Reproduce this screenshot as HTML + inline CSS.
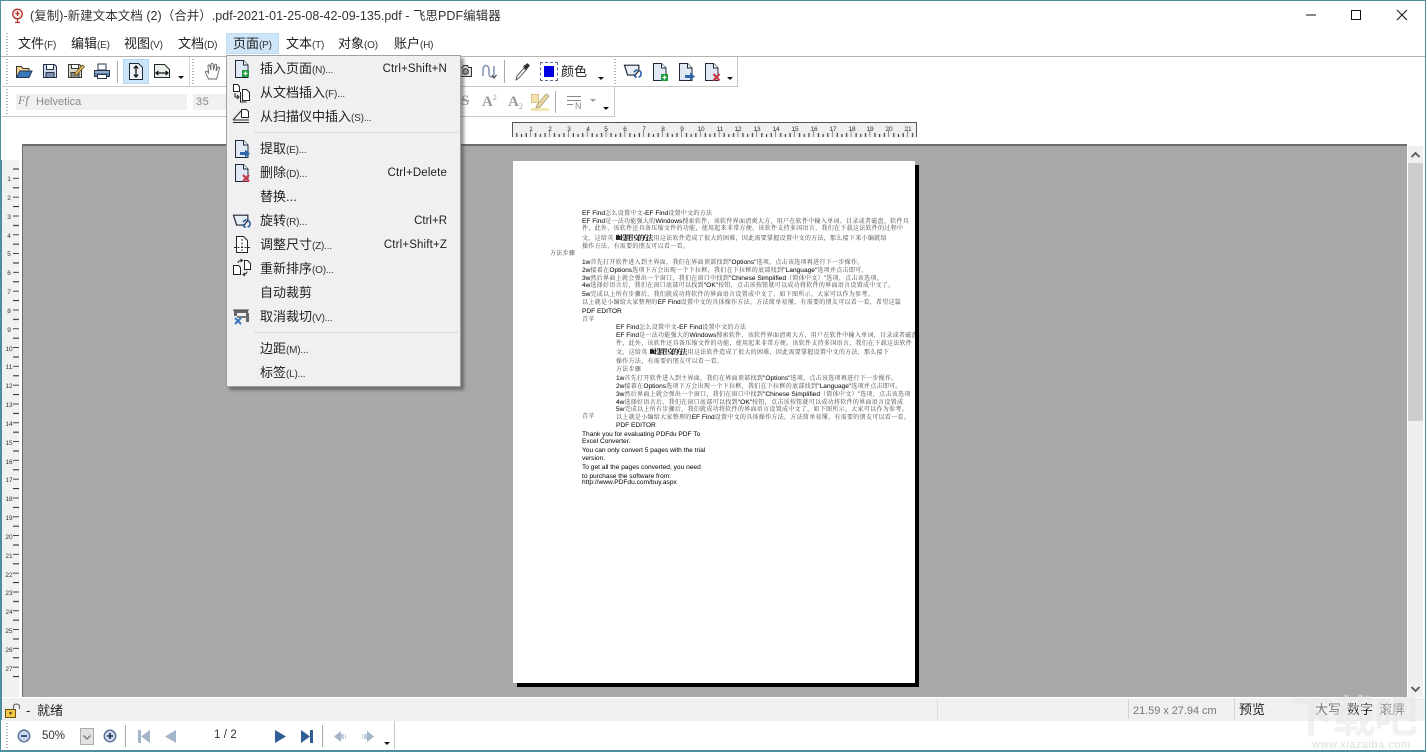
<!DOCTYPE html>
<html lang="zh"><head><meta charset="utf-8"><title>飞思PDF编辑器</title>
<style>
*{box-sizing:border-box}
html,body{margin:0;padding:0;width:1426px;height:752px;overflow:hidden;background:#fff}
body{font-family:"Liberation Sans","Noto Sans CJK SC",sans-serif;position:relative;color:#222}
.a{position:absolute}
.t{position:absolute;white-space:nowrap}
.m{position:absolute;top:35px;font-size:13px;line-height:18px;white-space:nowrap;color:#1c1c1c}
.m small,.i small{font-size:10px;color:#333;letter-spacing:-.2px}
.grip{position:absolute;width:2px;background:repeating-linear-gradient(#b5b5b5 0 1px,#fff 1px 3px)}
.sep{position:absolute;width:1px;background:#a9a9a9}
.i{position:absolute;left:260px;font-size:13px;line-height:18px;white-space:nowrap;color:#222}
.s{position:absolute;right:13px;font-size:11.5px;line-height:18px;letter-spacing:.15px;color:#222;white-space:nowrap}
.ic{position:absolute;overflow:visible}
.d{position:absolute;font-family:"Liberation Sans","Noto Serif CJK SC",serif;font-size:6px;line-height:9px;white-space:nowrap;color:#444;letter-spacing:.3px}
.d b{font-weight:400;color:#000;font-size:6.6px;letter-spacing:0}
.d b.o{font-weight:700;font-size:7px;letter-spacing:-2.6px;color:#222;margin-right:3px}
.ar{position:absolute;width:0;height:0;border-left:3px solid transparent;border-right:3px solid transparent;border-top:3px solid #111}
</style></head><body>

<svg width="0" height="0" style="position:absolute">
<defs>
<symbol id="pg" viewBox="0 0 20 20"><path d="M3.5 1.5h8l4.5 4.500v12.500H3.500z" fill="#dfe8f4" stroke="#1f2a3a"/><path d="M11.500 1.500v4.500h4.500" fill="#fff" stroke="#1f2a3a"/></symbol>
<symbol id="rot" viewBox="0 0 22 20"><path d="M1.500 3.500h16v6l-4 5H5z" fill="#e8eef6" stroke="#1d2530" stroke-width="1.300"/><circle cx="16" cy="13" r="4" fill="none" stroke="#2a62a8" stroke-width="1.800" stroke-dasharray="5 2"/></symbol>
</defs>
</svg>

<!-- title bar -->
<svg class="ic" style="left:10px;top:8px" width="15" height="16" viewBox="0 0 15 16"><circle cx="7.500" cy="6" r="4.800" fill="#fbe9e6" stroke="#b5352e" stroke-width="1.300"/><path d="M7.500 3v5M5.500 5.500h4M7.500 11v3M5 14.500h5" stroke="#b5352e" stroke-width="1.200" fill="none"/></svg>
<div class="t" id="title" style="left:30px;top:8px;font-size:12.5px;line-height:17px;color:#333;letter-spacing:.03px">(复制)-新建文本文档 (2)（合并）.pdf-2021-01-25-08-42-09-135.pdf - 飞思PDF编辑器</div>
<svg class="ic" style="left:1300px;top:8px" width="110" height="16" viewBox="0 0 110 16"><path d="M6 7h10" stroke="#111" stroke-width="1"/><rect x="51.500" y="2.500" width="9" height="9" fill="none" stroke="#111"/><path d="M97 2l10 10M107 2L97 12" stroke="#111" stroke-width="1"/></svg>

<!-- menu bar -->
<div class="a" style="left:226px;top:33px;width:53px;height:21px;background:#cfe5f8;border:1px solid #bcdcf4"></div>
<div class="m" style="left:18px">文件<small>(F)</small></div>
<div class="m" style="left:71px">编辑<small>(E)</small></div>
<div class="m" style="left:124px">视图<small>(V)</small></div>
<div class="m" style="left:178px">文档<small>(D)</small></div>
<div class="m" style="left:233px">页面<small>(P)</small></div>
<div class="m" style="left:286px">文本<small>(T)</small></div>
<div class="m" style="left:338px">对象<small>(O)</small></div>
<div class="m" style="left:394px">账户<small>(H)</small></div>
<div class="grip" style="left:6px;top:33px;height:22px"></div>

<!-- toolbar lines -->
<div class="a" style="left:0;top:56px;width:1426px;height:1px;background:#b3b3b3"></div>
<div class="a" style="left:2px;top:86px;width:735px;height:1px;background:#c8c8c8"></div>
<div class="a" style="left:2px;top:116px;width:612px;height:1px;background:#c8c8c8"></div>
<div class="a" style="left:737px;top:57px;width:1px;height:30px;background:#c8c8c8"></div>
<div class="a" style="left:614px;top:87px;width:1px;height:30px;background:#c8c8c8"></div>
<div class="a" style="left:189px;top:57px;width:1px;height:29px;background:#d4d4d4"></div>
<div class="grip" style="left:6px;top:59px;height:26px"></div>
<div class="grip" style="left:6px;top:89px;height:26px"></div>
<div class="grip" style="left:192px;top:59px;height:26px"></div>
<div class="grip" style="left:614px;top:59px;height:26px"></div>

<!-- toolbar row 1 -->
<svg class="ic" style="left:15px;top:63px" width="18" height="17" viewBox="0 0 18 17"><path d="M1.500 14V3.500h5l1.500 2h6v2" fill="#f2cf8e" stroke="#33312c"/><path d="M1.500 14.500L5 8h12l-3 6.500z" fill="#3d78bd" stroke="#1c3556"/></svg>
<svg class="ic" style="left:42px;top:63px" width="16" height="16" viewBox="0 0 16 16"><path d="M1.500 1.500h11l2 2v11h-13z" fill="#cfd8e8" stroke="#26304a"/><rect x="4.500" y="1.500" width="7" height="5" fill="#fff" stroke="#26304a"/><rect x="4" y="9.500" width="8" height="5" fill="#7f8fb0" stroke="#26304a"/></svg>
<svg class="ic" style="left:67px;top:63px" width="18" height="16" viewBox="0 0 18 16"><path d="M1.500 1.500h11l2 2v11h-13z" fill="#d9d6c8" stroke="#3a3a35"/><rect x="4.500" y="1.500" width="7" height="4" fill="#fff" stroke="#3a3a35"/><rect x="4" y="9.500" width="8" height="5" fill="#8d8d80" stroke="#3a3a35"/><path d="M8 10L15.500 2l2 1.500L10 11.500 7.500 12z" fill="#e9bd5c" stroke="#5c4a1c" stroke-width=".7"/></svg>
<svg class="ic" style="left:93px;top:63px" width="18" height="17" viewBox="0 0 18 17"><rect x="5" y="1" width="8" height="6" fill="#fff" stroke="#2b3548"/><path d="M1.500 7.500h15v6h-15z" fill="#5f7fa8" stroke="#27364c"/><rect x="4.500" y="11.500" width="9" height="4" fill="#fff" stroke="#27364c"/><path d="M2 9h14" stroke="#c5d3e6"/></svg>
<div class="sep" style="left:117px;top:61px;height:22px"></div>
<div class="a" style="left:123px;top:59px;width:26px;height:25px;background:#cce4f7;border:1px solid #b6d7f1"></div>
<svg class="ic" style="left:128px;top:62px" width="16" height="19" viewBox="0 0 16 19"><path d="M1.500 1.500h9l4 4v12h-13z" fill="#eef3f9" stroke="#1a2a3a"/><path d="M8 4v11M5.800 6.500L8 4l2.200 2.500M5.800 12.500L8 15l2.200-2.500" fill="none" stroke="#111" stroke-width="1.300"/></svg>
<svg class="ic" style="left:153px;top:63px" width="18" height="16" viewBox="0 0 18 16"><path d="M1.500 1.500h10l5 5v8h-15z" fill="#e9f0e9" stroke="#1a2a24"/><path d="M3 10h12M5.500 8L3 10l2.500 2M12.500 8L15 10l-2.500 2" fill="none" stroke="#111" stroke-width="1.200"/></svg>
<div class="ar" style="left:178px;top:76px"></div>
<svg class="ic" style="left:204px;top:62px" width="18" height="19" viewBox="0 0 18 19"><path d="M4.500 17C3.500 14 1 11 1.500 9.500c1-1 2 0 3 1.500L4 4c0-1.500 1.800-1.500 2 0l.8 4L7 2.500c0-1.500 2-1.500 2.200 0L9.500 8l1.300-5c.4-1.400 2-1 1.900.4L12 9l1.800-3.500c.7-1.200 2.200-.5 1.700 1L14 12c-.5 2-1 3.500-1.500 5z" fill="#fdfdfd" stroke="#666" stroke-width=".9"/></svg>
<svg class="ic" style="left:458px;top:63px" width="16" height="16" viewBox="0 0 16 16"><path d="M1.500 4.500h3l1-2h4l1 2h3v9h-12z" fill="#ddd" stroke="#333"/><circle cx="7.500" cy="8.500" r="2.800" fill="#99a" stroke="#333"/></svg>
<svg class="ic" style="left:481px;top:63px" width="18" height="17" viewBox="0 0 18 17"><path d="M2 13V7c0-6 6-6 6 0v4c0 4 5 4 5 0V3" fill="none" stroke="#7f93b0" stroke-width="1.500"/><path d="M11 12l2 3 2.500-3" fill="none" stroke="#333"/></svg>
<div class="sep" style="left:504px;top:60px;height:23px"></div>
<svg class="ic" style="left:515px;top:62px" width="15" height="19" viewBox="0 0 15 19"><path d="M1 18l1-4L9 6l2 2-7 8z" fill="#f4f4f4" stroke="#444" stroke-width=".8"/><path d="M8.500 4.500l4-3 2 2-3 4z" fill="#333" stroke="#333" stroke-width=".6"/></svg>
<div class="a" style="left:540px;top:62px;width:18px;height:19px;border:1px dashed #5c7390;background:#fff"></div>
<div class="a" style="left:544px;top:66px;width:10px;height:11px;background:#0000e0"></div>
<div class="t" style="left:561px;top:63px;font-size:13px;line-height:18px;color:#222">颜色</div>
<div class="ar" style="left:598px;top:77px"></div>
<svg class="ic" style="left:623px;top:62px" width="20" height="18"><use href="#rot" width="20" height="18"/></svg>
<svg class="ic" style="left:650px;top:62px" width="20" height="20"><use href="#pg" width="20" height="20"/><rect x="11" y="12" width="7" height="7" fill="#1d9a3c"/><path d="M12.500 15.500h4M14.500 13.500v4" stroke="#fff" stroke-width="1.300"/></svg>
<svg class="ic" style="left:676px;top:62px" width="20" height="20"><use href="#pg" width="20" height="20"/><path d="M9 13h5v-2.500l5 4-5 4V16H9z" fill="#2f66a8"/></svg>
<svg class="ic" style="left:702px;top:62px" width="20" height="20"><use href="#pg" width="20" height="20"/><path d="M11.500 12l6 6.500M17.500 12l-6 6.500" stroke="#c93a4a" stroke-width="2.200"/></svg>
<div class="ar" style="left:727px;top:77px"></div>

<!-- toolbar row 2 -->
<div class="a" style="left:16px;top:94px;width:171px;height:16px;background:#f0f0f0"></div>
<div class="a" style="left:193px;top:94px;width:35px;height:16px;background:#f0f0f0"></div>
<div class="t" style="left:18px;top:92px;font-family:'Liberation Serif',serif;font-style:italic;font-size:12px;line-height:17px;color:#888">Ff</div>
<div class="t" style="left:36px;top:95px;font-size:11px;line-height:14px;color:#8a8a8a">Helvetica</div>
<div class="t" style="left:196px;top:95px;font-size:11px;line-height:14px;letter-spacing:.5px;color:#8a8a8a">35</div>
<div class="t" style="left:461px;top:93px;font-family:'Liberation Serif',serif;font-weight:700;font-size:15px;line-height:17px;color:#a8a8a8;text-decoration:line-through">S</div>
<div class="t" style="left:482px;top:94px;font-family:'Liberation Serif',serif;font-weight:700;font-size:15px;line-height:17px;color:#9a9a9a">A<span style="font-size:8px;position:relative;top:-6px;font-weight:400">2</span></div>
<div class="t" style="left:508px;top:94px;font-family:'Liberation Serif',serif;font-weight:700;font-size:15px;line-height:17px;color:#9a9a9a">A<span style="font-size:8px;position:relative;top:3px;font-weight:400">2</span></div>
<svg class="ic" style="left:530px;top:92px" width="20" height="20" viewBox="0 0 20 20"><path d="M1 16h18v3H1z" fill="#f3e7b0"/><path d="M1.500 2.500h7v8h-7z" fill="#f3e2ab" stroke="#d8c589"/><path d="M7 13l9-11 3 2-9 11-4 1z" fill="#ead99c" stroke="#b5ab8a"/></svg>
<div class="sep" style="left:555px;top:91px;height:22px"></div>
<svg class="ic" style="left:567px;top:95px" width="30" height="16" viewBox="0 0 30 16"><path d="M0 1.500h14M0 5.500h14M0 9.500h6" stroke="#888"/><text x="8" y="14" font-size="9" fill="#888" font-family="Liberation Sans,sans-serif">N</text><path d="M23 4h6l-3 3z" fill="#999"/></svg>
<div class="ar" style="left:603px;top:107px"></div>

<!-- horizontal ruler -->
<svg class="ic" style="left:512px;top:122px" width="405" height="16" viewBox="0 0 405 16">
<defs><pattern id="hr" x="0" y="0" width="18.85" height="16" patternUnits="userSpaceOnUse"><rect x="4.300" y="11" width="1" height="4" fill="#222"/><rect x="9" y="12" width="1" height="3" fill="#222"/><rect x="13.700" y="11" width="1" height="4" fill="#222"/><rect x="18.400" y="8" width="1" height="7" fill="#222"/></pattern></defs>
<rect x=".5" y=".5" width="404" height="15" fill="#efefef"/><path d="M.5 15V.5h404V15" fill="none" stroke="#555"/><rect x="0" y="0" width="404" height="16" fill="url(#hr)"/>
<g font-family="Liberation Sans,sans-serif" font-size="6.500" fill="#333" text-anchor="middle"><text x="19" y="9">1</text><text x="38" y="9">2</text><text x="57" y="9">3</text><text x="76" y="9">4</text><text x="94" y="9">5</text><text x="113" y="9">6</text><text x="132" y="9">7</text><text x="151" y="9">8</text><text x="170" y="9">9</text><text x="189" y="9">10</text><text x="208" y="9">11</text><text x="226" y="9">12</text><text x="245" y="9">13</text><text x="264" y="9">14</text><text x="283" y="9">15</text><text x="302" y="9">16</text><text x="321" y="9">17</text><text x="340" y="9">18</text><text x="358" y="9">19</text><text x="377" y="9">20</text><text x="396" y="9">21</text></g></svg>

<!-- vertical ruler -->
<svg class="ic" style="left:2px;top:160px" width="20" height="537" viewBox="0 0 20 537">
<defs><pattern id="vr" x="0" y="0" width="20" height="18.800" patternUnits="userSpaceOnUse"><rect x="11" y="8.500" width="6" height="1" fill="#222"/><rect x="11" y="18" width="6" height="1" fill="#222"/></pattern></defs>
<rect width="17" height="537" fill="#f1f1f1"/><rect width="17" height="525" fill="url(#vr)"/><rect x="17" width="1" height="537" fill="#fff"/>
<g font-family="Liberation Sans,sans-serif" font-size="6.500" fill="#333" text-anchor="middle"><text x="7" y="21">1</text><text x="7" y="40">2</text><text x="7" y="59">3</text><text x="7" y="78">4</text><text x="7" y="96">5</text><text x="7" y="115">6</text><text x="7" y="134">7</text><text x="7" y="153">8</text><text x="7" y="172">9</text><text x="7" y="191">10</text><text x="7" y="209">11</text><text x="7" y="228">12</text><text x="7" y="247">13</text><text x="7" y="266">14</text><text x="7" y="285">15</text><text x="7" y="304">16</text><text x="7" y="322">17</text><text x="7" y="341">18</text><text x="7" y="360">19</text><text x="7" y="379">20</text><text x="7" y="398">21</text><text x="7" y="417">22</text><text x="7" y="435">23</text><text x="7" y="454">24</text><text x="7" y="473">25</text><text x="7" y="492">26</text><text x="7" y="511">27</text></g></svg>

<!-- work area -->
<div class="a" style="left:22px;top:144px;width:1385px;height:553px;background:#a9a8a9;border-top:2px solid #6c6c6c;border-left:1px solid #6c6c6c"></div>

<!-- scrollbar -->
<div class="a" style="left:1407px;top:146px;width:16px;height:551px;background:#efefef;border-left:1px solid #fff"></div>
<div class="a" style="left:1407px;top:163px;width:16px;height:258px;background:#cdcdcd;border-left:1px solid #fff"></div>
<svg class="ic" style="left:1408px;top:150px" width="15" height="10"><path d="M3.500 7l4-4 4 4" fill="none" stroke="#555" stroke-width="1.800"/></svg>
<svg class="ic" style="left:1408px;top:684px" width="15" height="10"><path d="M3.500 3l4 4 4-4" fill="none" stroke="#555" stroke-width="1.800"/></svg>

<!-- page -->
<div class="a" style="left:517px;top:165px;width:402px;height:522px;background:#000"></div>
<div class="a" style="left:513px;top:161px;width:402px;height:522px;background:#fff;overflow:hidden">
<div class="d" style="left:69px;top:48px"><b>EF Find</b>怎么设置中文<b>-EF Find</b>设置中文的方法</div>
<div class="d" style="left:69px;top:56px"><b>EF Find</b>是一法功能强大的<b>Windows</b>搜索软件，该软件界面清爽大方，用户在软件中输入单词、目录或者磁盘，软件具</div>
<div class="d" style="left:69px;top:64px">件，此外，该软件还具备压缩文件的功能，使用起来非常方便。该软件支持多国语言，我们在下载这法软件的过程中</div>
<div class="d" style="left:69px;top:73px">文，这给英 <b class="o">Find设置中文的方法</b>用这法软件造成了很大的困难，因此需要掌握设置中文的方法，那么接下来小编就给</div>
<div class="d" style="left:69px;top:82px">操作方法，有需要的朋友可以看一看。</div>
<div class="d" style="left:37px;top:89px">方法步骤</div>
<div class="d" style="left:69px;top:97px"><b>1w</b>首先打开软件进入到主界面，我们在界面顶部找到<b>"Options"</b>选项，点击该选项再进行下一步操作。</div>
<div class="d" style="left:69px;top:105px"><b>2w</b>接着在<b>Options</b>选项下方会出现一个下拉框，我们在下拉框的底部找到<b>"Language"</b>选项并点击即可。</div>
<div class="d" style="left:69px;top:113px"><b>3w</b>然后界面上就会弹出一个窗口，我们在窗口中找到<b>"Chinese Simplified</b>（简体中文）"选项，点击该选项。</div>
<div class="d" style="left:69px;top:120px"><b>4w</b>选择好语言后，我们在窗口底部可以找到<b>"OK"</b>按钮，点击该按钮就可以成功将软件的界面语言设置成中文了。</div>
<div class="d" style="left:69px;top:129px"><b>5w</b>完成以上所有步骤后，我们就成功将软件的界面语言设置成中文了，如下图所示，大家可以作为参考。</div>
<div class="d" style="left:69px;top:137px">以上就是小编给大家整理的<b>EF Find</b>设置中文的具体操作方法，方法简单易懂，有需要的朋友可以看一看，希望这篇</div>
<div class="d" style="left:69px;top:146px"><b>PDF EDITOR</b></div>
<div class="d" style="left:69px;top:155px">青苹</div>
<div class="d" style="left:103px;top:162px"><b>EF Find</b>怎么设置中文<b>-EF Find</b>设置中文的方法</div>
<div class="d" style="left:103px;top:170px"><b>EF Find</b>是一法功能强大的<b>Windows</b>搜索软件，该软件界面清爽大方，用户在软件中输入单词，目录或者磁盘</div>
<div class="d" style="left:103px;top:179px">件，此外，该软件还具备压缩文件的功能，使用起来非常方便。该软件支持多国语言，我们在下载这法软件</div>
<div class="d" style="left:103px;top:187px">文，这给英 <b class="o">Find设置中文的方法</b>用这法软件造成了很大的困难，因此需要掌握设置中文的方法，那么接下</div>
<div class="d" style="left:103px;top:197px">操作方法，有需要的朋友可以看一看。</div>
<div class="d" style="left:103px;top:205px">方法步骤</div>
<div class="d" style="left:103px;top:213px"><b>1w</b>首先打开软件进入到主界面，我们在界面顶部找到<b>"Options"</b>选项，点击该选项再进行下一步操作。</div>
<div class="d" style="left:103px;top:221px"><b>2w</b>接着在<b>Options</b>选项下方会出现一个下拉框，我们在下拉框的底部找到<b>"Language"</b>选项并点击即可。</div>
<div class="d" style="left:103px;top:229px"><b>3w</b>然后界面上就会弹出一个窗口，我们在窗口中找到<b>"Chinese Simplified</b>（简体中文）"选项，点击该选项</div>
<div class="d" style="left:103px;top:237px"><b>4w</b>选择好语言后，我们在窗口底部可以找到<b>"OK"</b>按钮，点击该按钮就可以成功将软件的界面语言设置成</div>
<div class="d" style="left:103px;top:244px"><b>5w</b>完成以上所有步骤后，我们就成功将软件的界面语言设置成中文了，如下图所示，大家可以作为参考。</div>
<div class="d" style="left:69px;top:252px">青苹</div>
<div class="d" style="left:103px;top:252px">以上就是小编给大家整理的<b>EF Find</b>设置中文的具体操作方法，方法简单易懂，有需要的朋友可以看一看。</div>
<div class="d" style="left:103px;top:260px"><b>PDF EDITOR</b></div>
<div class="d" style="left:69px;top:269px"><b>Thank you for evaluating PDFdu PDF To</b></div>
<div class="d" style="left:69px;top:276px"><b>Excel Converter.</b></div>
<div class="d" style="left:69px;top:285px"><b>You can only convert 5 pages with the trial</b></div>
<div class="d" style="left:69px;top:293px"><b>version.</b></div>
<div class="d" style="left:69px;top:302px"><b>To get all the pages converted, you need</b></div>
<div class="d" style="left:69px;top:311px"><b>to purchase the software from:</b></div>
<div class="d" style="left:69px;top:317px"><b>http://www.PDFdu.com/buy.aspx</b></div>
</div>

<!-- status bar -->
<div class="a" style="left:0;top:697px;width:1426px;height:24px;background:#f0f0f0;border-top:1px solid #fff"></div>
<svg class="ic" style="left:5px;top:703px" width="17" height="16" viewBox="0 0 17 16"><rect x=".5" y="6.500" width="10" height="8" fill="#f1c84c" stroke="#6b5312"/><circle cx="5.500" cy="10" r="1.300" fill="#5c4510"/><path d="M8.500 6V3c0-2.500 6-2.500 6 0v3" fill="none" stroke="#6f6f6f" stroke-width="1.200"/></svg>
<div class="t" style="left:26px;top:702px;font-size:13px;line-height:17px;color:#222">-</div>
<div class="t" style="left:37px;top:702px;font-size:13px;line-height:18px;color:#222">就绪</div>
<div class="sep" style="left:937px;top:699px;height:20px;background:#dcdcdc"></div>
<div class="sep" style="left:1128px;top:699px;height:20px;background:#d4d4d4"></div>
<div class="sep" style="left:1234px;top:699px;height:20px;background:#d4d4d4"></div>
<div class="t" style="left:1133px;top:704px;font-size:11px;line-height:14px;letter-spacing:-.05px;color:#777">21.59 x 27.94 cm</div>
<div class="t" style="left:1239px;top:701px;font-size:13px;line-height:18px;color:#222">预览</div>
<div class="t" style="left:1315px;top:701px;font-size:13px;line-height:18px;color:#777">大写</div>
<div class="t" style="left:1347px;top:701px;font-size:13px;line-height:18px;color:#222">数字</div>
<div class="t" style="left:1379px;top:701px;font-size:13px;line-height:18px;color:#777">滚屏</div>

<!-- bottom toolbar -->
<div class="grip" style="left:6px;top:723px;height:26px"></div>
<svg class="ic" style="left:17px;top:729px" width="14" height="14" viewBox="0 0 14 14"><circle cx="7" cy="7" r="5.800" fill="#c9d6ea" stroke="#4f6a92" stroke-width="1.300"/><path d="M4 7h6" stroke="#1f3556" stroke-width="1.600"/></svg>
<div class="t" style="left:42px;top:729px;font-size:11.500px;line-height:15px;color:#333">50%</div>
<div class="a" style="left:80px;top:728px;width:14px;height:17px;background:#e2e2e2;border:1px solid #adadad"></div>
<svg class="ic" style="left:81px;top:734px" width="12" height="8"><path d="M2.500 1.500L6 5l3.500-3.500" fill="none" stroke="#666" stroke-width="1.200"/></svg>
<svg class="ic" style="left:103px;top:729px" width="14" height="14" viewBox="0 0 14 14"><circle cx="7" cy="7" r="5.800" fill="#c9d6ea" stroke="#4f6a92" stroke-width="1.300"/><path d="M4 7h6M7 4v6" stroke="#1f3556" stroke-width="1.600"/></svg>
<div class="sep" style="left:125px;top:725px;height:22px"></div>
<svg class="ic" style="left:137px;top:730px" width="14" height="13"><path d="M1 0h3v13H1z" fill="#a4b4c9"/><path d="M13 0v13L4 6.500z" fill="#a4b4c9"/></svg>
<svg class="ic" style="left:164px;top:730px" width="13" height="13"><path d="M12 0v13L1 6.500z" fill="#a4b4c9"/></svg>
<div class="t" style="left:214px;top:728px;font-size:11.500px;line-height:15px;letter-spacing:.1px;color:#333">1 / 2</div>
<svg class="ic" style="left:274px;top:730px" width="13" height="13"><path d="M1 0v13l11-6.500z" fill="#2f5d96"/></svg>
<svg class="ic" style="left:300px;top:730px" width="14" height="13"><path d="M1 0v13l9-6.500z" fill="#2f5d96"/><path d="M10 0h3v13h-3z" fill="#2f5d96"/></svg>
<div class="sep" style="left:322px;top:725px;height:22px"></div>
<svg class="ic" style="left:333px;top:730px" width="16" height="13"><path d="M8 1v11L1 6.500z" fill="#a4b4c9"/><path d="M8 4h3v5H8zM12 4h1v5h-1z" fill="#c3cede"/></svg>
<svg class="ic" style="left:359px;top:730px" width="16" height="13"><path d="M8 1v11l7-5.500z" fill="#a4b4c9"/><path d="M5 4h3v5H5zM3 4h1v5H3z" fill="#c3cede"/></svg>
<div class="ar" style="left:384px;top:742px"></div>
<div class="a" style="left:394px;top:721px;width:1px;height:28px;background:#c8c8c8"></div>

<!-- watermark -->
<div class="t" style="left:1290px;top:693px;font-size:44px;line-height:50px;letter-spacing:-2px;color:rgba(228,228,228,.5);font-weight:700">下载吧</div>
<div class="t" style="left:1312px;top:739px;font-size:11px;line-height:12px;letter-spacing:.5px;color:#dedede">www.xiazaiba.com</div>

<!-- dropdown menu -->
<div class="a" style="left:226px;top:55px;width:235px;height:332px;background:#f0f0f2;border:1px solid #a0a0a0;box-shadow:3px 3px 3px rgba(60,60,60,.55)">
<div class="a" style="left:27px;top:76px;width:205px;height:1px;background:#d8d8d8"></div>
<div class="a" style="left:27px;top:276px;width:205px;height:1px;background:#d8d8d8"></div>
<div class="s" style="top:4px">Ctrl+Shift+N</div>
<div class="s" style="top:108px">Ctrl+Delete</div>
<div class="s" style="top:156px;letter-spacing:0">Ctrl+R</div>
<div class="s" style="top:180px">Ctrl+Shift+Z</div>
</div>
<div class="i" style="top:60px">插入页面<small>(N)...</small></div>
<div class="i" style="top:84px">从文档插入<small>(F)...</small></div>
<div class="i" style="top:108px">从扫描仪中插入<small>(S)...</small></div>
<div class="i" style="top:140px">提取<small>(E)...</small></div>
<div class="i" style="top:164px">删除<small>(D)...</small></div>
<div class="i" style="top:188px">替换...</div>
<div class="i" style="top:212px">旋转<small>(R)...</small></div>
<div class="i" style="top:236px">调整尺寸<small>(Z)...</small></div>
<div class="i" style="top:260px">重新排序<small>(O)...</small></div>
<div class="i" style="top:284px">自动裁剪</div>
<div class="i" style="top:308px">取消裁切<small>(V)...</small></div>
<div class="i" style="top:340px">边距<small>(M)...</small></div>
<div class="i" style="top:364px">标签<small>(L)...</small></div>

<svg class="ic" style="left:232px;top:59px" width="20" height="20"><use href="#pg" width="20" height="20"/><rect x="10" y="11" width="7" height="7" fill="#1d9a3c"/><path d="M11.500 14.500h4M13.500 12.500v4" stroke="#fff" stroke-width="1.300"/></svg>
<svg class="ic" style="left:231px;top:83px" width="20" height="20" viewBox="0 0 20 20"><path d="M2.500 1.500h4l2 2v5h-6z" fill="#fff" stroke="#222"/><path d="M4 10v4h4M6 12l2 2-2 2" fill="none" stroke="#222"/><path d="M11.500 6.500h4l3 3v8h-7z" fill="#fff" stroke="#222"/><path d="M9.500 9v10h6" fill="none" stroke="#222"/></svg>
<svg class="ic" style="left:232px;top:107px" width="19" height="18" viewBox="0 0 19 18"><path d="M1 13L9 4" stroke="#222" fill="none"/><path d="M9.500 2.500h5l2 2v6h-7z" fill="#fff" stroke="#222"/><path d="M1 13h16M1 15.500h16" stroke="#222"/></svg>
<svg class="ic" style="left:232px;top:139px" width="20" height="20"><use href="#pg" width="20" height="20"/><path d="M8 13h5v-2.500l5 4-5 4V16H8z" fill="#2f66a8"/></svg>
<svg class="ic" style="left:232px;top:163px" width="20" height="20"><use href="#pg" width="20" height="20"/><path d="M11 12l6 6.500M17 12l-6 6.500" stroke="#c93a4a" stroke-width="2.200"/></svg>
<svg class="ic" style="left:232px;top:212px" width="20" height="18"><use href="#rot" width="20" height="18"/></svg>
<svg class="ic" style="left:233px;top:235px" width="18" height="20" viewBox="0 0 18 20"><path d="M3.500 1.500h7l4 4v12h-11z" fill="#fff" stroke="#222"/><path d="M9 4v12M1 12.500h16" stroke="#222" stroke-dasharray="2 1.500" fill="none"/></svg>
<svg class="ic" style="left:232px;top:259px" width="20" height="18" viewBox="0 0 20 18"><path d="M1.500 6.500h5l2 2v7h-7z" fill="#fff" stroke="#222"/><path d="M12.500 1.500h3l3 3v6h-6z" fill="#fff" stroke="#222"/><path d="M6 4c0-2 2-2.500 4-2.500M8.500 0l2 1.500-2 1.500M11 15.500c2 0 4-1 4-3M13 14l-2 1.500 2 1.500" fill="none" stroke="#222"/></svg>
<svg class="ic" style="left:232px;top:308px" width="20" height="18" viewBox="0 0 20 18"><path d="M2 2h14v3h1v9h-3V5H5v3H2z" fill="#666"/><path d="M5 8h10v2H5z" fill="#777"/><path d="M1 2h16" stroke="#444"/><path d="M3 10l6 6M9 10l-6 6" stroke="#3a78bd" stroke-width="2"/></svg>

<!-- window border -->
<div class="a" style="left:0;top:0;width:1426px;height:752px;border:1px solid #4d8ea3;pointer-events:none"></div>
<div class="a" style="left:0;top:160px;width:2px;height:560px;background:#4d8ea3"></div>
<div class="a" style="left:0;top:750px;width:1426px;height:2px;background:#4d8ea3"></div>
</body></html>
